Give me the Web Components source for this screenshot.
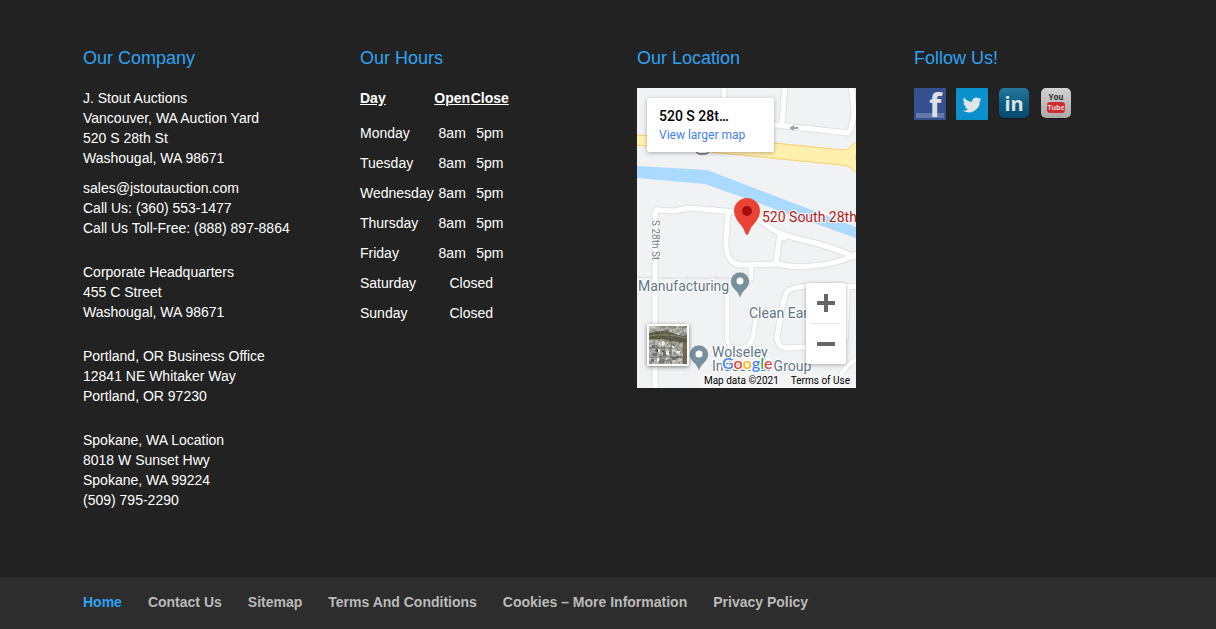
<!DOCTYPE html>
<html lang="en">
<head>
<meta charset="utf-8">
<meta name="viewport" content="width=device-width, initial-scale=1">
<title>J. Stout Auctions</title>
<style>
  html, body { margin: 0; min-height: 100%; }
  body { background: #222; color: #fff; font: 14px/20px "Liberation Sans", Arial, sans-serif; }
</style>
</head>
<body>
<site-footer>
  <footer-widget heading="Our Company"><company-info></company-info></footer-widget>
  <footer-widget heading="Our Hours"><opening-hours></opening-hours></footer-widget>
  <footer-widget heading="Our Location"><location-map></location-map></footer-widget>
  <footer-widget heading="Follow Us!"><social-links></social-links></footer-widget>
  <footer-nav slot="nav"></footer-nav>
</site-footer>

<template id="site-footer">
  <style>
    :host { display: flex; flex-direction: column; min-height: 100vh; }
    .widgets { flex: 1; display: grid; grid-template-columns: repeat(4, minmax(0, 1fr)); gap: 58px; align-items: start;
      width: calc(100% - 64px); max-width: 1050px; margin: 0 auto; padding: 48px 0 67px; box-sizing: border-box; }
    @media (max-width: 980px) { .widgets { grid-template-columns: repeat(2, minmax(0, 1fr)); } }
    @media (max-width: 520px) { .widgets { grid-template-columns: minmax(0, 1fr); } }
  </style>
  <div class="widgets"><slot></slot></div>
  <slot name="nav"></slot>
</template>

<template id="footer-widget">
  <style>
    :host { display: block; }
    h4 { margin: 0 0 20px; font-size: 18px; line-height: 20px; font-weight: 400; color: #2ea3f2; }
  </style>
  <h4></h4>
  <slot></slot>
</template>

<template id="company-info">
  <style>
    :host { display: block; }
    p { margin: 0 0 24px; white-space: nowrap; }
    p:first-of-type { margin-bottom: 10px; }
    p:last-of-type { margin-bottom: 0; }
    a { color: inherit; text-decoration: none; }
  </style>
  <p>J. Stout Auctions<br>Vancouver, WA Auction Yard<br>520 S 28th St<br>Washougal, WA 98671</p>
  <p><a href="mailto:sales@jstoutauction.com">sales@jstoutauction.com</a><br>Call Us: (360) 553-1477<br>Call Us Toll-Free: (888) 897-8864</p>
  <p>Corporate Headquarters<br>455 C Street<br>Washougal, WA 98671</p>
  <p>Portland, OR Business Office<br>12841 NE Whitaker Way<br>Portland, OR 97230</p>
  <p>Spokane, WA Location<br>8018 W Sunset Hwy<br>Spokane, WA 99224<br>(509) 795-2290</p>
</template>

<template id="opening-hours">
  <style>
    :host { display: block; }
    table { border-collapse: collapse; }
    th, td { padding: 5px 0; text-align: center; }
    th { padding: 0 0 10px; text-decoration: underline; min-width: 37px; }
    th:last-child { min-width: 38px; }
    th:first-child, td:first-child { text-align: left; }
  </style>
  <table>
    <thead><tr><th>Day</th><th>Open</th><th>Close</th></tr></thead>
    <tbody>
      <tr><td>Monday</td><td>8am</td><td>5pm</td></tr>
      <tr><td>Tuesday</td><td>8am</td><td>5pm</td></tr>
      <tr><td>Wednesday</td><td>8am</td><td>5pm</td></tr>
      <tr><td>Thursday</td><td>8am</td><td>5pm</td></tr>
      <tr><td>Friday</td><td>8am</td><td>5pm</td></tr>
      <tr><td>Saturday</td><td colspan="2">Closed</td></tr>
      <tr><td>Sunday</td><td colspan="2">Closed</td></tr>
    </tbody>
  </table>
</template>

<template id="location-map">
  <style>
    :host { display: block; position: relative; height: 300px; overflow: hidden; background: #f1f2f4; color: #000; font-family: Roboto, Arial, sans-serif; }
    .map { display: block; width: 100%; height: 100%; }
    .map text { font-family: Roboto, Arial, sans-serif; font-size: 14px; paint-order: stroke; stroke: #fff; stroke-width: 2px; stroke-linejoin: round; }
    .poi { fill: #5f7683; }
    .card { position: absolute; left: 10px; top: 10px; width: 127px; height: 54px; box-sizing: border-box; padding: 8px 12px; background: #fff; border-radius: 2px; box-shadow: 0 1px 4px rgba(0,0,0,.3); }
    .card strong { display: block; font-size: 14px; line-height: 20px; font-weight: 500; }
    .card a { display: block; font-size: 12px; line-height: 18px; color: #427fed; text-decoration: none; white-space: nowrap; }
    .zoom { position: absolute; right: 10px; top: 195px; width: 40px; background: #fff; border-radius: 2px; box-shadow: 0 1px 4px rgba(0,0,0,.3); display: flex; flex-direction: column; align-items: center; }
    .zoom button, .satellite { border: 0; padding: 0; background: none; display: block; cursor: pointer; }
    .zoom button { width: 40px; height: 40px; }
    .zoom svg { display: block; margin: auto; }
    .zoom i { width: 30px; height: 1px; background: #e6e6e6; }
    .satellite { position: absolute; left: 10px; top: 236px; width: 42px; height: 42px; border: 2px solid #fff; border-radius: 2px; box-shadow: 0 1px 4px rgba(0,0,0,.5); overflow: hidden; }
    .satellite svg { display: block; }
    .google { position: absolute; left: 85px; top: 265px; font-size: 16px; line-height: 20px; font-weight: 600; font-family: Lato, sans-serif; text-decoration: none; text-shadow: 0 0 2px #fff, 1px 1px #fff, -1px -1px #fff, 1px -1px #fff, -1px 1px #fff; }
    .b { color: #4285f4; } .r { color: #ea4335; } .y { color: #fbbc05; } .g { color: #34a853; }
    .legal { position: absolute; right: 0; bottom: 0; display: flex; gap: 12px; padding: 0 6px; font-size: 10px; line-height: 14px; background: rgba(245,245,245,.7); white-space: nowrap; }
    .legal a { color: #000; text-decoration: none; }
  </style>
  <svg class="map" viewBox="0 0 219 300" preserveAspectRatio="xMinYMin slice" aria-label="Map of 520 South 28th Street">
    <defs>
      <g id="roads" fill="none" stroke-linejoin="round" stroke-linecap="round">
        <path d="M87 -4V40M148 -4L145 37M130 36L211 45Q215 42 217 24L214 -4"/>
        <path d="M18 304V126Q18 121 23 122L36 123L53 120L98 124Q118 127 132 139Q143 147 166 152Q192 158 216 168M143 146Q143 150 147 150M216 168L223 164M216 168L224 171M91 125L89 152Q88 177 106 177L140 176Q158 180 175 178Q196 177 216 168M143 146L139 175"/>
        <path d="M224 199Q155 195 150 204Q146 211 143 232L140 249Q141 261 151 260L172 259"/>
      </g>
      <g id="lanes" fill="none" stroke-linejoin="round" stroke-linecap="round">
        <path d="M114 177V190Q114 194 108 193Q90 191 90 202V250Q91 261 101 260Q113 260 116 249L120 222M211 198L209 250M224 270Q203 277 198 304"/>
      </g>
      <path id="pin" d="M0 17C-1 12 -3.500 9.500 -6.500 6.500A9.500 9.500 0 1 1 6.500 6.500C3.500 9.500 1 12 0 17Z"/>
    </defs>
    <path d="M0 189L36 190H110M0 206Q10 199 14 193V189M50 187V191M79 187V191" fill="none" stroke="#dadde0"/>
    <use href="#roads" stroke="#dfe1e4" stroke-width="7"/>
    <use href="#lanes" stroke="#e3e5e7" stroke-width="6"/>
    <use href="#lanes" stroke="#fff" stroke-width="4"/>
    <use href="#roads" stroke="#fff" stroke-width="5"/>
    <path d="M0 78L70 82L219 139V150L68 96L0 90Z" fill="#aadaff"/>
    <path d="M-2 47L137 55L205 62Q212 62 214 58L221 53V86L214 80Q211 77 204 77L73 64L-2 57Z" fill="#fff0ae" stroke="#f7cf6a"/>
    <path d="M221 63Q216 69 221 75" fill="#f1f2f4" stroke="#f7cf6a"/>
    <rect x="59" y="55" width="13" height="11" rx="4" fill="#fff" stroke="#666" stroke-width="1.500"/>
    <path d="M161 40H154" fill="none" stroke="#9aa5ad" stroke-width="2"/><path d="M152 40L157 37V43Z" fill="#9aa5ad"/>
    <text transform="translate(15 132) rotate(90)" style="font-size:10px" fill="#737b80">S 28th St</text>
    <text class="poi" x="1" y="203">Manufacturing</text>
    <text class="poi" x="112" y="230">Clean Earth</text>
    <text class="poi" x="75" y="269">Wolseley</text>
    <text class="poi" x="75" y="283">Industrial Group</text>
    <use href="#pin" x="103" y="194" fill="#78909c" stroke="#fff" stroke-width=".5"/><circle cx="103" cy="193" r="3.500" fill="#fff"/>
    <use href="#pin" x="62" y="267" fill="#78909c" stroke="#fff" stroke-width=".5"/><circle cx="62" cy="266" r="3.500" fill="#fff"/>
    <path d="M110 147C108 147 108 141 103 136Q97 129 97 123A13 13 0 0 1 123 123Q123 129 117 136C112 141 112 147 110 147Z" fill="#ea4335"/>
    <circle cx="110" cy="123" r="5" fill="#a50e0e"/>
    <text x="125" y="134" fill="#b31412">520 South 28th</text>
  </svg>
  <div class="card"><strong>520 S 28t…</strong><a href="#map">View larger map</a></div>
  <div class="zoom">
    <button type="button" aria-label="Zoom in"><svg width="18" height="18"><path d="M7 0h4v7h7v4h-7v7H7v-7H0V7h7z" fill="#666"/></svg></button>
    <i></i>
    <button type="button" aria-label="Zoom out"><svg width="18" height="18"><path d="M0 7h18v4H0z" fill="#666"/></svg></button>
  </div>
  <button class="satellite" type="button" aria-label="Show satellite imagery">
    <svg width="38" height="38" viewBox="0 0 38 38">
      <defs>
        <filter id="ground" x="0" y="0" width="100%" height="100%">
          <feTurbulence type="fractalNoise" baseFrequency=".3" numOctaves="3" seed="8"/>
          <feColorMatrix values=".8 .4 0 0 -.2  .7 .5 0 0 -.21  .6 .5 0 0 -.2  0 0 0 0 1"/>
        </filter>
      </defs>
      <rect width="38" height="38" filter="url(#ground)"/>
      <path d="M0 7Q16 3 24 7T38 9V17Q25 16 18 14T0 14Z" fill="#454b33" opacity=".8"/>
      <path d="M0 10Q17 7 38 12M0 14Q14 12 25 17T36 38" fill="none" stroke="#8b8867" stroke-width="1"/>
      <path d="M34 17L38 15V38H34Z" fill="#65563f" opacity=".8"/>
      <path d="M3 19h3v3H3zM4 27h4v3H4zM14 26h4v4h-4zM23 31h4v3h-4zM2 33h3v3H2zM13 33h2v4h-2z" fill="#66717a"/>
      <path d="M10 16l5-1 1 4-5 2zM17 25h3v4h-3zM23 20h2v2h-2zM9 23h2v3H9zM28 25h3v2h-3zM8 32h2v3H8z" fill="#f0eeea"/>
      <path d="M0 22h24M12 15v23M22 17v21M0 31h32" stroke="#3f4240" opacity=".5"/>
    </svg>
  </button>
  <a class="google" href="#google" aria-label="Google Maps"><span class="b">G</span><span class="r">o</span><span class="y">o</span><span class="b">g</span><span class="g">l</span><span class="r">e</span></a>
  <div class="legal"><span>Map data ©2021</span><a href="#terms">Terms of Use</a></div>
</template>

<template id="social-links">
  <style>
    :host { display: flex; flex-wrap: wrap; gap: 10px; }
    a, svg { display: block; width: 32px; height: 32px; }
    svg { overflow: visible; }
    text { font-family: "Open Sans", sans-serif; font-weight: 700; }
  </style>
  <a href="#facebook" aria-label="Facebook"><svg viewBox="0 0 32 32">
    <rect width="32" height="32" rx="1" fill="#35508e"/><rect x="2" y="25" width="28" height="5" fill="#6279aa"/>
    <text x="15" y="29" font-size="32" fill="#dedfe1">f</text></svg></a>
  <a href="#twitter" aria-label="Twitter"><svg viewBox="0 0 32 32">
    <rect width="32" height="32" rx="1" fill="#0a91cb"/>
    <path d="M25.500 11.200L23.500 11.800L24.900 9.600L22.500 10.400A4 4 0 0 0 16 13.700Q11.300 13.500 8 9.400Q6.200 12.300 9 14.900L7.300 14.500Q7.400 17.300 10.300 18.400H8.700Q9.500 20.700 12.200 21.200Q10 22.900 7 22.800Q12.500 25.800 17.800 23.200Q23.600 20.100 23.800 13.500Z" fill="#dfe5e8"/></svg></a>
  <a href="#linkedin" aria-label="LinkedIn"><svg viewBox="0 0 32 32">
    <defs><linearGradient id="li" x2="0" y2="1"><stop stop-color="#28789e"/><stop offset=".48" stop-color="#0d5c83"/><stop offset="1" stop-color="#064a70"/></linearGradient></defs>
    <rect x="1" y="1" width="30" height="30" rx="5" fill="#111b20"/><rect x="1" y="0" width="30" height="30" rx="5" fill="url(#li)"/>
    <text x="16" y="23" font-size="20" text-anchor="middle" fill="#dfe3e5">in</text></svg></a>
  <a href="#youtube" aria-label="YouTube"><svg viewBox="0 0 32 32">
    <defs><linearGradient id="yt" x2="0" y2="1"><stop stop-color="#d2d2d2"/><stop offset="1" stop-color="#a9a9a9"/></linearGradient></defs>
    <rect x="1" y="1" width="30" height="30" rx="5" fill="#171717"/><rect x="1" y="0" width="30" height="30" rx="5" fill="url(#yt)"/>
    <text x="16" y="12" font-size="8" text-anchor="middle" fill="#333">You</text>
    <rect x="7" y="14" width="18" height="11" rx="3" fill="#ce2d30"/>
    <text x="16" y="22" font-size="7" text-anchor="middle" fill="#f0d5d5">Tube</text></svg></a>
</template>

<template id="footer-nav">
  <style>
    :host { display: block; background: #2d2d2d; }
    nav { width: calc(100% - 64px); max-width: 1050px; margin: 0 auto; padding: 15px 0 17px; display: flex; flex-wrap: wrap; column-gap: 26px; font-weight: 700; }
    a { color: #bbb; text-decoration: none; white-space: nowrap; }
    a[aria-current] { color: #2ea3f2; }
  </style>
  <nav aria-label="Footer">
    <a href="#home" aria-current="page">Home</a>
    <a href="#contact">Contact Us</a>
    <a href="#sitemap">Sitemap</a>
    <a href="#terms">Terms And Conditions</a>
    <a href="#cookies">Cookies – More Information</a>
    <a href="#privacy">Privacy Policy</a>
  </nav>
</template>

<script>
  class TemplateElement extends HTMLElement {
    constructor() {
      super();
      const template = document.getElementById(this.localName);
      this.attachShadow({ mode: "open" }).append(template.content.cloneNode(true));
    }
  }
  class FooterWidget extends TemplateElement {
    connectedCallback() {
      this.shadowRoot.querySelector("h4").textContent = this.getAttribute("heading");
    }
  }
  customElements.define("site-footer", class extends TemplateElement {});
  customElements.define("footer-widget", FooterWidget);
  customElements.define("company-info", class extends TemplateElement {});
  customElements.define("opening-hours", class extends TemplateElement {});
  customElements.define("location-map", class extends TemplateElement {});
  customElements.define("social-links", class extends TemplateElement {});
  customElements.define("footer-nav", class extends TemplateElement {});
</script>
</body>
</html>
